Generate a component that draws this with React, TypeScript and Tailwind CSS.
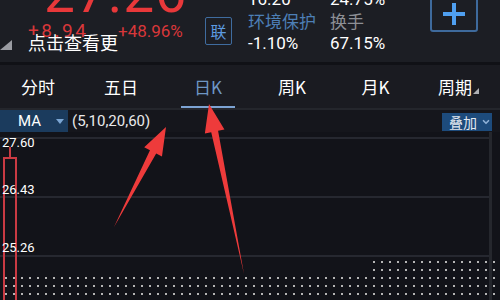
import { ChevronDown } from 'lucide-react'

const num = { fontFamily: 'Roboto, "Noto Sans CJK SC", sans-serif' }
const cjk = { fontFamily: '"Noto Sans CJK SC", Roboto, sans-serif' }

const tabs = [
  { t: '分时', w: 'w-[76px]' },
  { t: '五日', w: 'w-[90px]' },
  { t: '日K', w: 'w-[84px]' },
  { t: '周K', w: 'w-[84px]' },
  { t: '月K', w: 'w-[83px]' },
  { t: '周期', w: 'w-[83px]' },
]

function Arrow({ tail, tip }: { tail: [number, number]; tip: [number, number] }) {
  const [x1, y1] = tail
  const [x2, y2] = tip
  const dx = x2 - x1, dy = y2 - y1
  const len = Math.hypot(dx, dy)
  const ux = dx / len, uy = dy / len
  const px = -uy, py = ux
  const headLen = 28, headW = 10, shaftW = 3.5
  const bx = x2 - ux * headLen, by = y2 - uy * headLen
  const pts = [
    [x1, y1],
    [bx + px * shaftW, by + py * shaftW],
    [bx + px * headW, by + py * headW],
    [x2, y2],
    [bx - px * headW, by - py * headW],
    [bx - px * shaftW, by - py * shaftW],
  ].map(p => p.join(',')).join(' ')
  return <polygon points={pts} fill="#ee3b3b" />
}

export default function App() {
  return (
    <div className="relative w-[500px] h-[300px] overflow-hidden bg-[#121319] text-white" style={num}>
      {/* Header */}
      <div className="relative h-[62px] bg-[#1c1e24] flex">
        <div className="relative w-[240px]">
          <div className="absolute left-[44px] top-[-34px] text-[55px] leading-none text-[#e8383a] tracking-[1px]">27.26</div>
          <span className="absolute left-[28px] top-[20px] text-[19px] leading-[22px] tracking-[2.5px] text-[#d8373a]">+8.94</span>
          <span className="absolute left-[118px] top-[20px] text-[17px] leading-[22px] text-[#d8373a]">+48.96%</span>
          <div className="absolute left-[28px] top-[31px] text-[18px] leading-[22px] text-white" style={cjk}>点击查看更</div>
          <div className="absolute left-0 top-[40px] w-0 h-0 border-l-[12px] border-l-transparent border-b-[10px] border-b-[#9a9ca2]" />
          <div className="absolute left-[205px] top-[17px] w-[27px] h-[28px] border border-[#3f6c9f] rounded-[2px] flex items-center justify-center text-[16px] text-[#5d9be0]" style={cjk}>联</div>
        </div>
        <div className="flex flex-col w-[90px] pl-[8px] text-[17px] leading-[22px]">
          <span className="-mt-[12px] text-white">16.20</span>
          <span className="text-[#4d7fb6]" style={cjk}>环境保护</span>
          <span className="text-white">-1.10%</span>
        </div>
        <div className="flex flex-col w-[90px] text-[17px] leading-[22px]">
          <span className="-mt-[12px] text-white">24.75%</span>
          <span className="text-[#8d8f95]" style={cjk}>换手</span>
          <span className="text-white">67.15%</span>
        </div>
        <div className="ml-auto mr-[22px] -mt-[4px] w-[48px] h-[36px] border-2 border-[#3e6a9c] rounded-[3px] flex items-center justify-center">
          <div className="relative w-[22px] h-[22px]">
            <div className="absolute left-[9px] top-0 w-[4px] h-[22px] bg-[#4f9ff0]" />
            <div className="absolute left-0 top-[9px] w-[22px] h-[4px] bg-[#4f9ff0]" />
          </div>
        </div>
      </div>
      <div className="h-[3px] bg-[#101116]" />

      {/* Tabs */}
      <div className="h-[43px] bg-[#1a1b21] flex items-stretch" style={cjk}>
        {tabs.map(({ t, w }, i) => (
          <div key={t} className={`relative ${w} flex items-center justify-center text-[17px] ${i === 2 ? 'text-[#6e96c4]' : 'text-white'}`}>
            <span>{t}</span>
            {i === 5 && <span className="ml-[1px] mt-[8px] w-0 h-0 border-l-[6px] border-l-transparent border-b-[6px] border-b-[#aeb0b5]" />}
            {i === 2 && <div className="absolute bottom-0 left-[15px] right-[15px] h-[2px] bg-[#7ca3d3]" />}
          </div>
        ))}
      </div>
      <div className="h-[2px] bg-[#24262c]" />

      {/* MA row */}
      <div className="h-[22px] bg-[#15161c] flex items-center">
        <div className="w-[68px] h-full bg-[#1b3b5d] flex items-center pl-[18px] text-[15px]">
          <span>MA</span>
          <span className="ml-auto mr-[4px] w-0 h-0 border-x-[4px] border-x-transparent border-t-[5px] border-t-[#7ba6d4]" />
        </div>
        <span className="ml-[4px] text-[15px] text-[#e9e9ea]">(5,10,20,60)</span>
        <div className="ml-auto mr-[8px] mt-[2px] w-[50px] h-[18px] bg-[#1d4b7c] flex items-center pl-[7px] text-[14px] text-[#e1e8f0]" style={cjk}>
          <span>叠加</span>
          <ChevronDown className="ml-auto mr-[1px] text-[#8fb1d6]" size={10} strokeWidth={4} />
        </div>
      </div>

      {/* Chart */}
      <div className="relative h-[180px] bg-[#121319] border-r-[3px] border-[#25272d] mr-[8px]">
        <div className="h-[5px]" />
        <div className="h-[59px] border-t-2 border-[#262830]" />
        <div className="h-[59px] border-t-2 border-[#262830]" />
        <div className="h-[59px] border-t-2 border-[#262830]" />
        <div className="absolute left-[3px] top-[25px] w-[14px] h-[200px] border-2 border-[#c93a43]" />
        <div className="absolute left-[9px] top-[15px] w-[2px] h-[10px] bg-[#c93a43]" />
        <span className="absolute left-[2px] top-[4px] text-[13px] leading-none">27.60</span>
        <span className="absolute left-[2px] top-[51px] text-[13px] leading-none">26.43</span>
        <span className="absolute left-[2px] top-[109px] text-[13px] leading-none">25.26</span>
      </div>

      {/* Arrows */}
      <svg className="absolute inset-0 pointer-events-none" width={500} height={300}>
        <Arrow tail={[114, 227]} tip={[166, 127]} />
        <Arrow tail={[244, 274]} tip={[209, 104]} />
      </svg>

      {/* Dotted overlay */}
      <div className="absolute left-0 top-[272px] w-[500px] h-[28px] bg-[radial-gradient(circle,#b8b8b8_0.7px,transparent_1.1px)] bg-[length:8px_8px] bg-[position:2px_2px]" />
      <div className="absolute left-[368px] top-[256px] w-[132px] h-[16px] bg-[radial-gradient(circle,#b8b8b8_0.7px,transparent_1.1px)] bg-[length:8px_8px] bg-[position:2px_2px]" />
    </div>
  )
}
